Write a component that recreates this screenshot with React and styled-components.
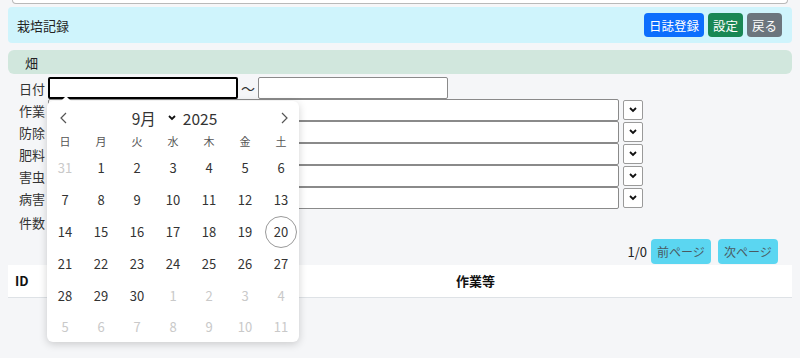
import React from "react";
import styled, { createGlobalStyle } from "styled-components";

const Global = createGlobalStyle`
  html, body { margin: 0; padding: 0; background: #f5f6f8; }
  body { font-family: "Noto Sans CJK JP", "Noto Sans", sans-serif; font-size: 13px; color: #212529; }
  * { box-sizing: border-box; }
`;

const Page = styled.div`
  padding: 0 8px;
  height: 358px;
  overflow: hidden;
`;

const Stub = styled.div`
  height: 4px;
  margin: 0 4px;
  background: #fff;
  border: 1px solid #b9b9b9;
  border-top: none;
  border-radius: 0 0 6px 6px;
`;

const HeaderBar = styled.div`
  margin-top: 3px;
  height: 36px;
  background: #cff4fc;
  display: flex;
  align-items: center;
  justify-content: space-between;
  padding: 0 10px 0 9px;
  border-radius: 4px;
`;

const Title = styled.div`
  font-size: 13px;
  color: #222;
`;

const ButtonGroup = styled.div`
  display: flex;
  gap: 4px;
`;

const Btn = styled.button`
  height: 24px;
  padding: 0 5px;
  border: none;
  border-radius: 4px;
  font-family: inherit;
  font-size: 12.5px;
  color: #fff;
  background: ${(p) => p.$bg};
`;

const Section = styled.div`
  margin-top: 7px;
  height: 24px;
  background: #d1e7dd;
  border-radius: 6px;
  display: flex;
  align-items: center;
  padding-left: 17px;
  font-size: 13px;
  color: #222;
`;

const Form = styled.div`
  margin-top: 3px;
  padding-left: 11px;
  display: flex;
  flex-direction: column;
`;

const Row = styled.div`
  display: flex;
  align-items: center;
  height: 22px;
  margin-top: ${(p) => p.$mt || 0}px;
`;

const Label = styled.span`
  width: 29px;
  flex: none;
  font-size: 13px;
  color: #333;
`;

const DateField = styled.div`
  position: relative;
`;

const Input = styled.div`
  width: ${(p) => p.$w}px;
  height: 22px;
  background: #fff;
  border: ${(p) => (p.$focus ? "2px solid #000" : "1px solid #8a8a8a")};
  border-radius: 2px;
`;

const Tilde = styled.span`
  width: 20px;
  text-align: center;
  font-size: 14px;
  color: #333;
`;

const SelectBox = styled.div`
  width: 20px;
  height: 20px;
  margin-left: 4px;
  background: #fff;
  border: 1px solid #9a9a9a;
  border-radius: 2px;
  display: flex;
  align-items: center;
  justify-content: center;
`;

const Pager = styled.div`
  margin-top: 6px;
  display: flex;
  justify-content: flex-end;
  align-items: center;
  gap: 4px;
  padding-right: 14px;
  height: 25px;
`;

const PageCount = styled.span`
  font-size: 13px;
  color: #222;
`;

const PageBtn = styled.button`
  width: 60px;
  height: 25px;
  border: none;
  border-radius: 4px;
  background: #5bd6f1;
  color: #4a5a62;
  font-family: inherit;
  font-size: 12px;
  padding: 0;
  margin-left: ${(p) => p.$ml || 0}px;
`;

const Table = styled.table`
  margin-top: 1px;
  width: 100%;
  border-collapse: collapse;
  background: #fff;
`;

const Th = styled.th`
  height: 32px;
  border-bottom: 1px solid #dee2e6;
  font-size: 13px;
  font-weight: 700;
  color: #111;
  text-align: ${(p) => p.$align || "left"};
  padding: 0 0 0 7px;
  width: ${(p) => (p.$w ? p.$w + "px" : "auto")};
`;

/* Calendar popup */
const Popup = styled.div`
  position: absolute;
  top: 24px;
  left: -1px;
  width: 252px;
  height: 241px;
  background: #fff;
  border-radius: 6px;
  box-shadow: 0 2px 8px rgba(0, 0, 0, 0.18);
  z-index: 10;
  &::before {
    content: "";
    position: absolute;
    top: -5px;
    left: 14px;
    border-left: 5px solid transparent;
    border-right: 5px solid transparent;
    border-bottom: 5px solid #fff;
  }
`;

const CalHeader = styled.div`
  height: 34px;
  display: flex;
  align-items: center;
  justify-content: space-between;
  padding: 0 9px 0 10px;
`;

const NavArrow = styled.span`
  width: 12px;
  display: flex;
  justify-content: center;
`;

const MonthYear = styled.div`
  display: flex;
  align-items: center;
  font-size: 15.5px;
  color: #333;
  margin-left: 2px;
`;

const MonthChevron = styled.span`
  display: inline-flex;
  margin: 0 7px 0 12px;
`;

const WeekRow = styled.div`
  display: grid;
  grid-template-columns: repeat(7, 36px);
  height: 12px;
  margin-bottom: 5px;
  align-items: center;
`;

const WeekDay = styled.span`
  text-align: center;
  font-size: 11px;
  line-height: 12px;
  color: #555;
`;

const DayGrid = styled.div`
  display: grid;
  grid-template-columns: repeat(7, 36px);
  grid-auto-rows: 31.8px;
`;

const Day = styled.span`
  display: flex;
  align-items: center;
  justify-content: center;
  font-size: 13px;
  color: ${(p) => (p.$muted ? "#c9c9c9" : "#333")};
`;

const Today = styled.span`
  width: 32px;
  height: 32px;
  border: 1px solid #9a9a9a;
  border-radius: 50%;
  display: flex;
  align-items: center;
  justify-content: center;
`;

const Chevron = ({ dir }) => {
  const d = dir === "left" ? "M6 1 L1 6 L6 11" : "M1 1 L6 6 L1 11";
  return (
    <svg width="7" height="12" viewBox="0 0 7 12">
      <path d={d} fill="none" stroke="#555" strokeWidth="1.2" />
    </svg>
  );
};

const SmallDown = () => (
  <svg width="8" height="6" viewBox="0 0 8 6">
    <path d="M1 1 L4 4 L7 1" fill="none" stroke="#111" strokeWidth="1.8" />
  </svg>
);

const weekdays = ["日", "月", "火", "水", "木", "金", "土"];

const days = [
  [31, true], [1], [2], [3], [4], [5], [6],
  [7], [8], [9], [10], [11], [12], [13],
  [14], [15], [16], [17], [18], [19], [20, false, true],
  [21], [22], [23], [24], [25], [26], [27],
  [28], [29], [30], [1, true], [2, true], [3, true], [4, true],
  [5, true], [6, true], [7, true], [8, true], [9, true], [10, true], [11, true],
];

const Calendar = () => (
  <Popup>
    <CalHeader>
      <NavArrow><Chevron dir="left" /></NavArrow>
      <MonthYear>
        <span>9月</span>
        <MonthChevron><SmallDown /></MonthChevron>
        <span>2025</span>
      </MonthYear>
      <NavArrow><Chevron dir="right" /></NavArrow>
    </CalHeader>
    <WeekRow>
      {weekdays.map((w) => (
        <WeekDay key={w}>{w}</WeekDay>
      ))}
    </WeekRow>
    <DayGrid>
      {days.map(([n, muted, today], i) => (
        <Day key={i} $muted={muted}>
          {today ? <Today>{n}</Today> : n}
        </Day>
      ))}
    </DayGrid>
  </Popup>
);

const filterLabels = ["作業", "防除", "肥料", "害虫", "病害"];

export default function App() {
  return (
    <>
      <Global />
      <Page>
        <Stub />
        <HeaderBar>
          <Title>栽培記録</Title>
          <ButtonGroup>
            <Btn $bg="#0d6efd">日誌登録</Btn>
            <Btn $bg="#198754">設定</Btn>
            <Btn $bg="#6c757d">戻る</Btn>
          </ButtonGroup>
        </HeaderBar>
        <Section>畑</Section>
        <Form>
          <Row>
            <Label>日付</Label>
            <DateField>
              <Input $w={190} $focus />
              <Calendar />
            </DateField>
            <Tilde>〜</Tilde>
            <Input $w={190} />
          </Row>
          {filterLabels.map((l) => (
            <Row key={l}>
              <Label>{l}</Label>
              <Input $w={571} />
              <SelectBox><SmallDown /></SelectBox>
            </Row>
          ))}
          <Row $mt={2}>
            <Label>件数</Label>
          </Row>
        </Form>
        <Pager>
          <PageCount>1/0</PageCount>
          <PageBtn>前ページ</PageBtn>
          <PageBtn $ml={3}>次ページ</PageBtn>
        </Pager>
        <Table>
          <thead>
            <tr>
              <Th $w={144}>ID</Th>
              <Th $align="center">作業等</Th>
            </tr>
          </thead>
        </Table>
      </Page>
    </>
  );
}
